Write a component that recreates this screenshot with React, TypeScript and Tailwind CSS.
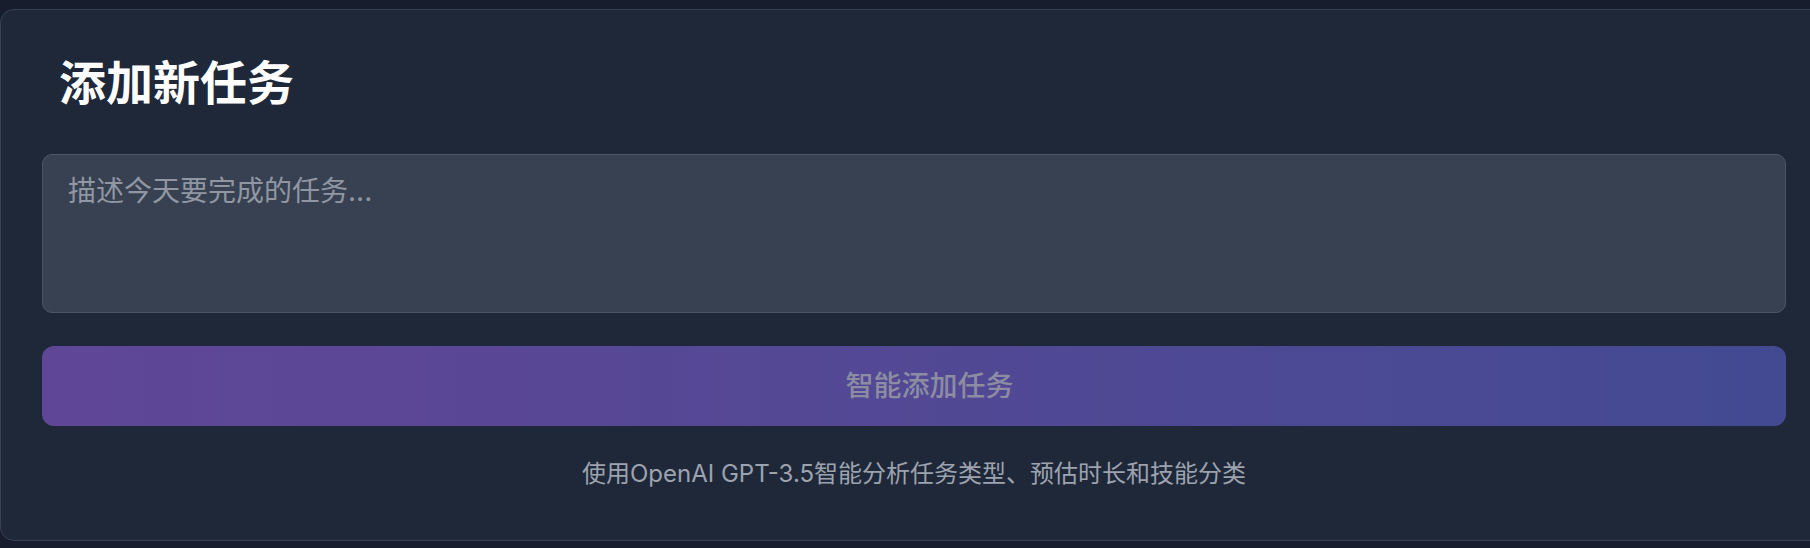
import React from 'react';

const fontStack = { fontFamily: 'Inter, "Noto Sans CJK SC", sans-serif' };

const TaskInput = () => {
  return (
    <div className="min-h-[548px] w-[1810px] overflow-hidden bg-[#181d2d] pt-[9px]" style={fontStack}>
      <section className="w-[1828px] rounded-[14px] border border-[#374151] bg-[#1f2839] px-[41px] pt-[45px] pb-[50px]">
        <h2 className="ml-[17px] mb-[43px] text-[47px] leading-[56px] font-semibold text-white">添加新任务</h2>

        {/* task description */}
        <textarea
          placeholder="描述今天要完成的任务..."
          className="block h-[159px] w-full resize-none rounded-[10px] border border-[#4b5563] bg-[#374151] px-[25px] pt-[18px] text-[28px] leading-[36px] text-white placeholder:text-[#9097a3] outline-none"
        />

        <button
          disabled
          className="mt-[33px] flex h-[80px] w-full items-center justify-center rounded-[12px] bg-gradient-to-r from-[#604697] to-[#434a92] pl-[31px] text-[28px] font-medium text-[#8c8ca2]"
        >
          智能添加任务
        </button>

        <p className="mt-[32px] text-center text-[24px] leading-[32px] text-[#9ca3af]">
          使用OpenAI GPT-3.5智能分析任务类型、预估时长和技能分类
        </p>
      </section>
    </div>
  );
};

export default function App() {
  return <TaskInput />;
}
